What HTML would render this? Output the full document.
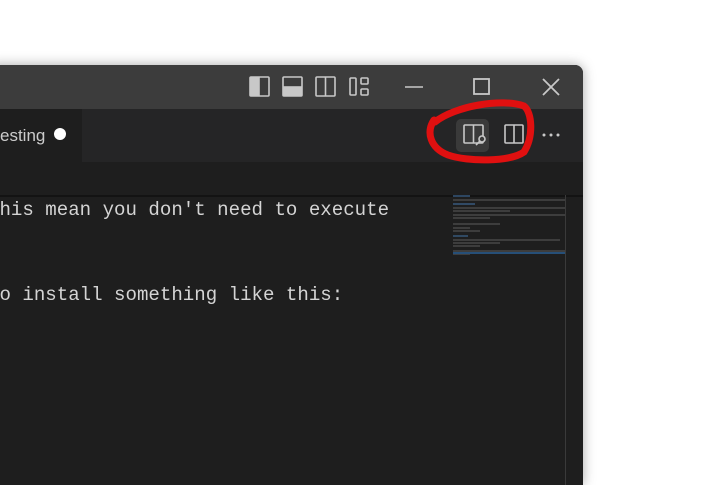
<!DOCTYPE html>
<html><head><style>
body{margin:0;width:717px;height:462px;background:#fff;position:relative;overflow:hidden;font-family:"Liberation Sans",sans-serif}
.win{position:absolute;left:-10px;top:65px;width:593px;height:420px;background:#1e1e1e;border-top-right-radius:8px;overflow:hidden;box-shadow:0 0 12px rgba(0,0,0,.35)}
.title{position:absolute;left:0;top:0;width:100%;height:44px;background:#3c3c3c}
.tabs{position:absolute;left:0;top:44px;width:100%;height:53px;background:#252526}
.tab{position:absolute;left:0;top:0;width:92px;height:53px;background:#1e1e1e}
.code{position:absolute;left:-2px;font-family:"Liberation Mono",monospace;font-size:19.1px;color:#d4d4d4;white-space:pre}
</style></head><body>
<div class="win">
<div class="title"></div>
<div class="tabs"><div class="tab"></div>
<div style="position:absolute;left:10px;top:17px;color:#cccccc;font-size:17px">esting</div>
<div style="position:absolute;left:64px;top:19px;width:12px;height:12px;border-radius:50%;background:#fff"></div>
<div style="position:absolute;left:466px;top:10px;width:33px;height:33px;border-radius:5px;background:#3a3a3a"></div>
</div>
<div style="position:absolute;left:0;top:130px;width:100%;height:2px;background:rgba(0,0,0,.35)"></div>
<div class="code" style="top:134px">this mean you don't need to execute</div>
<div class="code" style="top:219px">to install something like this:</div>
<div style="position:absolute;left:575px;top:130px;width:1px;height:300px;background:#3a3a3a"></div>
</div>
<svg width="717" height="462" style="position:absolute;left:0;top:0" fill="none" stroke="#c8c8c8" stroke-width="1.6">
<rect x="250" y="77" width="19" height="19" rx="1"/><rect x="251" y="78" width="8" height="17" fill="#c8c8c8"/>
<rect x="283" y="77" width="19" height="19" rx="1"/><rect x="284" y="87" width="17" height="8" fill="#c8c8c8"/>
<rect x="316" y="77" width="19" height="19" rx="1"/><line x1="325.5" y1="77" x2="325.5" y2="96"/>
<rect x="350" y="78" width="6" height="17" rx="1"/><rect x="361" y="78" width="7" height="6" rx="1"/><rect x="361" y="89" width="7" height="6" rx="1"/>
<line x1="405" y1="87" x2="423" y2="87"/>
<rect x="474" y="79" width="15" height="15" stroke-width="1.8"/>
<path d="M543 79L559 95M559 79L543 95" stroke-width="1.8"/>
<rect x="464" y="125" width="19" height="18" rx="1"/><line x1="473.5" y1="125" x2="473.5" y2="143"/>
<circle cx="482" cy="139" r="3" fill="#3a3a3a"/><line x1="480" y1="141" x2="476" y2="145"/>
<rect x="505" y="125" width="18" height="18" rx="1"/><line x1="514" y1="125" x2="514" y2="143"/>
<g fill="#c8c8c8" stroke="none"><circle cx="544" cy="135" r="1.5"/><circle cx="551" cy="135" r="1.5"/><circle cx="558" cy="135" r="1.5"/></g>
<path d="M435 122C455 106 502 98 524 106C532 112 534 136 524 152C510 162 468 162 448 155C430 148 426 132 434 120" stroke="#e01010" stroke-width="7" stroke-linecap="round"/>
<g stroke="#505050" stroke-width="1.2">
<line x1="453" y1="196" x2="470" y2="196" stroke="#3d6690"/><line x1="453" y1="200" x2="565" y2="200"/>
<line x1="453" y1="204" x2="475" y2="204" stroke="#3d6690"/><line x1="453" y1="208" x2="565" y2="208"/><line x1="453" y1="211" x2="510" y2="211"/>
<line x1="453" y1="215" x2="565" y2="215"/><line x1="453" y1="218" x2="490" y2="218"/>
<line x1="453" y1="224" x2="500" y2="224"/><line x1="453" y1="228" x2="470" y2="228"/><line x1="453" y1="231" x2="480" y2="231"/>
<line x1="453" y1="236" x2="468" y2="236" stroke="#3d6690"/><line x1="453" y1="240" x2="560" y2="240"/><line x1="453" y1="243" x2="500" y2="243"/><line x1="453" y1="246" x2="480" y2="246"/>
<line x1="453" y1="251" x2="565" y2="251"/><line x1="453" y1="254" x2="470" y2="254"/>
</g>
<rect x="453" y="252" width="112" height="2" fill="#264f78" stroke="none"/>
</svg>
</body></html>
